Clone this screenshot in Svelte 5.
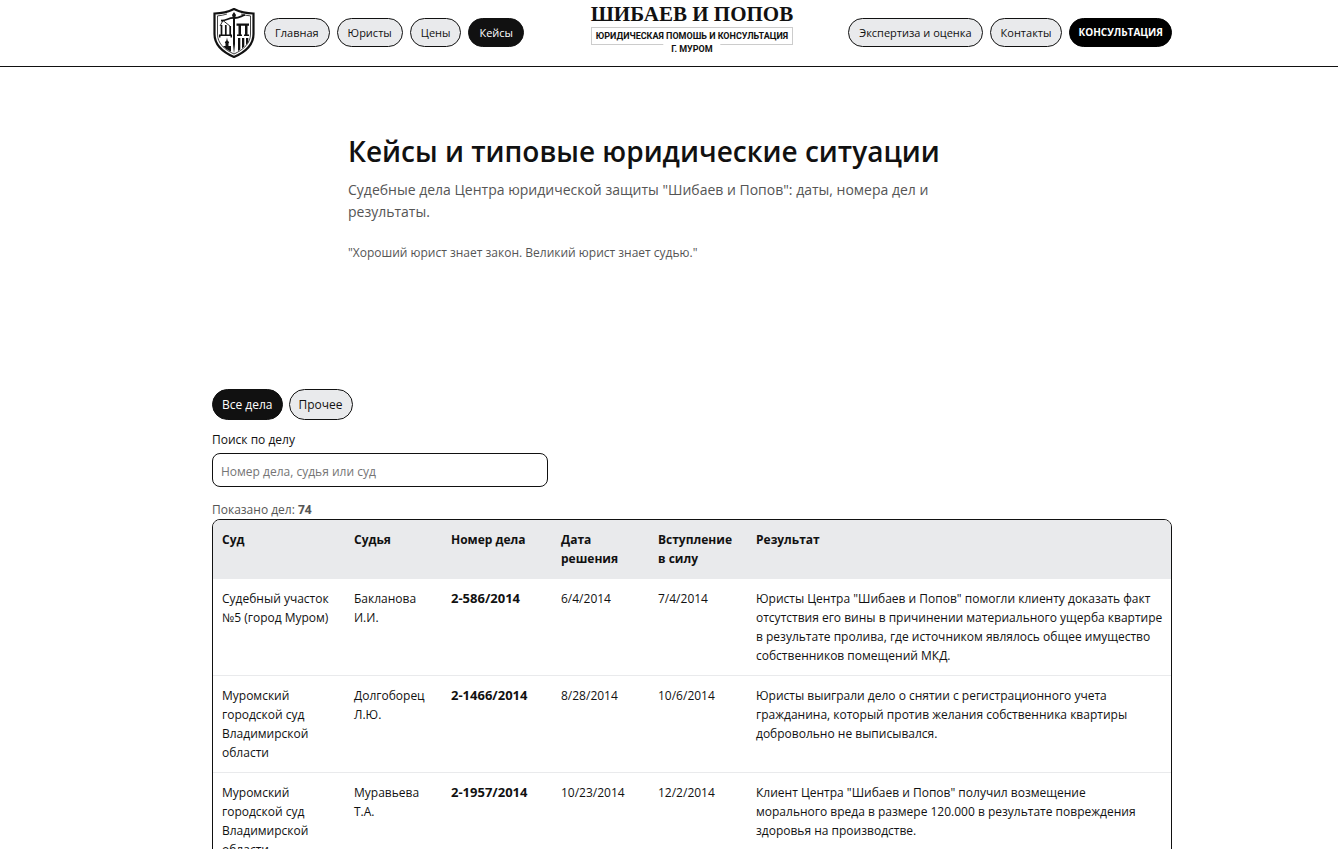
<script>
  const leftLinks = [
    { label: 'Главная', href: '#home' },
    { label: 'Юристы', href: '#lawyers' },
    { label: 'Цены', href: '#prices' },
    { label: 'Кейсы', href: '#cases', active: true },
  ];

  const rightLinks = [
    { label: 'Экспертиза и оценка', href: '#expertise' },
    { label: 'Контакты', href: '#contacts' },
  ];

  const filters = ['Все дела', 'Прочее'];
  const total = 74;

  const cases = [
    {
      court: 'Судебный участок №5 (город Муром)',
      judge: 'Бакланова И.И.',
      number: '2-586/2014',
      decided: '6/4/2014',
      effective: '7/4/2014',
      result:
        'Юристы Центра "Шибаев и Попов" помогли клиенту доказать факт отсутствия его вины в причинении материального ущерба квартире в результате пролива, где источником являлось общее имущество собственников помещений МКД.',
    },
    {
      court: 'Муромский городской суд Владимирской области',
      judge: 'Долгоборец Л.Ю.',
      number: '2-1466/2014',
      decided: '8/28/2014',
      effective: '10/6/2014',
      result:
        'Юристы выиграли дело о снятии с регистрационного учета гражданина, который против желания собственника квартиры добровольно не выписывался.',
    },
    {
      court: 'Муромский городской суд Владимирской области',
      judge: 'Муравьева Т.А.',
      number: '2-1957/2014',
      decided: '10/23/2014',
      effective: '12/2/2014',
      result:
        'Клиент Центра "Шибаев и Попов" получил возмещение морального\u00a0вреда в размере 120.000 в результате повреждения здоровья на производстве.',
    },
  ];

  let activeFilter = $state('Все дела');
  let query = $state('');

  let visible = $derived(
    cases.filter((c) => `${c.number} ${c.judge} ${c.court}`.toLowerCase().includes(query.trim().toLowerCase()))
  );
  let count = $derived(query.trim() ? visible.length : total);
</script>

<div class="page">
  <header class="header">
    <div class="container header-row">
      <nav class="nav">
        <a class="logo" href="#home" aria-label="Шибаев и Попов">
          <svg viewBox="0 0 42 50" width="42" height="50" aria-hidden="true">
            <!-- shield -->
            <path d="M21 1C15 4 8 5.500 1.500 5.500V26c0 11 8 18 19.500 23 11.500-5 19.500-12 19.500-23V5.500C34 5.500 27 4 21 1z" fill="#fff" stroke="#111" stroke-width="2.200" />
            <path d="M14 6C11 7 8 7.600 4.500 7.900V26c0 9 6.500 15.500 16.500 20 10-4.500 16.500-11 16.500-20V7.900C34 7.600 31 7 28 6" fill="none" stroke="#111" stroke-width="0.800" />
            <!-- sword and beam -->
            <path d="M21 4l2 3-1 3v26l-1 10-1-10V10l-1-3z" fill="#111" />
            <path d="M8 12.500c5 .5 8-3 13-2.500 5 .3 7-2 11-3" fill="none" stroke="#111" stroke-width="1.800" />
            <!-- left pan -->
            <path d="M10 12.500L7 18M10 12.500l7.500 6" stroke="#111" stroke-width="0.900" />
            <path d="M8.500 17v10M12.800 17v10M17.200 18v9" stroke="#111" stroke-width="1.700" />
            <path d="M6 26.500h13v3h-1.500V28h-10v1.500H6z" fill="#111" />
            <!-- portico -->
            <path d="M23.500 15.500H36v2.300H23.500zM25.500 17.800h2.500V27h-2.500zM32 17.800h2.500V27H32zM24 26.500h5V28h-5zM31 26.500h5V28h-5z" fill="#111" />
            <path d="M25 30h2.300v11.500L25 43zM29 30h2.300v8.500L29 40.500zM33 30h2.300v4L33 37z" fill="#111" />
            <!-- church -->
            <path d="M14 29.500l.6 3 1.600 1.700-.7 1.300V38h2.500v5.800c-4-2-6-3.500-8-5.800h2.500v-2.500l-.7-1.300 1.600-1.700z" fill="#111" />
          </svg>
        </a>
        {#each leftLinks as link}
          <a class="pill" class:active={link.active} href={link.href}>{link.label}</a>
        {/each}
      </nav>

      <a class="brand" href="#home">
        <span class="brand-name">ШИБАЕВ И ПОПОВ</span>
        <span class="brand-box">
          ЮРИДИЧЕСКАЯ ПОМОШЬ И КОНСУЛЬТАЦИЯ
          <span class="brand-city">Г. МУРОМ</span>
        </span>
      </a>

      <nav class="nav nav-right">
        {#each rightLinks as link}
          <a class="pill" href={link.href}>{link.label}</a>
        {/each}
        <a class="pill cta" href="#consultation">КОНСУЛЬТАЦИЯ</a>
      </nav>
    </div>
  </header>

  <main>
    <section class="hero">
      <h1>Кейсы и типовые юридические ситуации</h1>
      <p class="lead">Судебные дела Центра юридической защиты "Шибаев и Попов": даты, номера дел и результаты.</p>
      <p class="quote">"Хороший юрист знает закон. Великий юрист знает судью."</p>
    </section>

    <section class="container">
      <div class="filters">
        {#each filters as name}
          <button class="chip" class:active={activeFilter === name} onclick={() => (activeFilter = name)}>{name}</button>
        {/each}
      </div>

      <div class="search">
        <label for="case-search">Поиск по делу</label>
        <input id="case-search" type="text" placeholder="Номер дела, судья или суд" bind:value={query} />
      </div>

      <p class="count">Показано дел: <strong>{count}</strong></p>

      <div class="table-wrap">
        <table>
          <colgroup>
            <col class="col-court" />
            <col class="col-judge" />
            <col class="col-number" />
            <col class="col-judge" />
            <col class="col-effective" />
            <col />
          </colgroup>
          <thead>
            <tr>
              <th>Суд</th>
              <th>Судья</th>
              <th>Номер дела</th>
              <th>Дата решения</th>
              <th>Вступление в силу</th>
              <th>Результат</th>
            </tr>
          </thead>
          <tbody>
            {#each visible as item}
              <tr>
                <td>{item.court}</td>
                <td>{item.judge}</td>
                <td class="number"><strong>{item.number}</strong></td>
                <td>{item.decided}</td>
                <td>{item.effective}</td>
                <td class="result">{item.result}</td>
              </tr>
            {/each}
          </tbody>
        </table>
      </div>
    </section>
  </main>
</div>

<style>
  :global(body) {
    margin: 0;
    background: #fff;
  }

  .page {
    font-family: 'Open Sans', 'Noto Sans', sans-serif;
    font-size: 12px;
    line-height: 19px;
    color: #111;
  }

  .header,
  main {
    padding-left: 46px;
  }

  .header {
    background: #fff;
    border-bottom: 1px solid #111;
  }

  .container {
    max-width: 960px;
    margin: 0 auto;
  }

  .header-row {
    display: grid;
    grid-template-columns: 1fr auto 1fr;
    align-items: center;
    padding-bottom: 1px;
    height: 65px;
  }

  .nav {
    display: flex;
    align-items: center;
    gap: 7px;
  }

  .nav-right {
    justify-content: flex-end;
  }

  .logo {
    display: flex;
    padding: 0 2px 0 1px;
  }

  .pill {
    padding: 5px 10px;
    border: 1px solid #111;
    border-radius: 16px;
    background: #e9eaec;
    color: #111;
    font-size: 11px;
    line-height: 17px;
    text-decoration: none;
    white-space: nowrap;
  }

  .pill.active {
    background: #111;
    color: #fff;
  }

  .pill.cta {
    padding: 5px 8px;
    background: #000;
    border-color: #000;
    color: #fff;
    font-size: 10px;
    font-weight: 700;
  }

  .brand {
    display: flex;
    flex-direction: column;
    align-self: start;
    padding-top: 2px;
    color: #111;
    text-align: center;
    text-decoration: none;
    white-space: nowrap;
  }

  .brand-name {
    font-family: 'Liberation Serif', serif;
    font-size: 21px;
    font-weight: 700;
    line-height: 25px;
  }

  .brand-box {
    position: relative;
    border: 1px solid #ccc;
    font-family: Roboto, sans-serif;
    font-size: 9px;
    font-weight: 700;
    line-height: 16px;
  }

  .brand-city {
    position: absolute;
    top: 15px;
    left: 50%;
    transform: translateX(-50%);
    padding: 0 8px;
    background: #fff;
    line-height: 13px;
  }

  .hero {
    max-width: 688px;
    margin: 0 auto;
    padding: 64px 0 127px;
  }

  h1 {
    margin: 0 0 8px;
    font-size: 28px;
    font-weight: 600;
    line-height: 40px;
  }

  .lead {
    max-width: 620px;
    margin: 0 0 20px;
    color: #555;
    font-size: 14px;
    line-height: 22px;
  }

  .quote {
    margin: 0;
    color: #555;
  }

  .filters {
    display: flex;
    gap: 6px;
    margin-bottom: 10px;
  }

  .chip {
    padding: 5px 9px;
    border: 1px solid #111;
    border-radius: 16px;
    background: #e9eaec;
    color: #111;
    font: inherit;
    cursor: pointer;
  }

  .chip.active {
    background: #111;
    color: #fff;
  }

  .search {
    display: flex;
    flex-direction: column;
    gap: 4px;
    max-width: 336px;
    margin-bottom: 14px;
  }

  .search input {
    height: 34px;
    box-sizing: border-box;
    padding: 2px 8px 0;
    border: 1px solid #111;
    border-radius: 8px;
    background: #fff;
    color: #111;
    font: inherit;
  }

  .search input::placeholder {
    color: #757575;
  }

  .count {
    margin: 0;
    color: #555;
    line-height: 18px;
  }

  .table-wrap {
    overflow: hidden;
    border: 1px solid #111;
    border-radius: 8px;
    background: #fff;
  }

  table {
    width: 100%;
    table-layout: fixed;
    border-collapse: collapse;
  }

  .col-court {
    width: 132px;
  }

  .col-judge {
    width: 97px;
  }

  .col-number {
    width: 110px;
  }

  .col-effective {
    width: 98px;
  }

  th,
  td {
    padding: 10px 9px;
    border-bottom: 1px solid #e9eaec;
    text-align: left;
    vertical-align: top;
  }

  th {
    background: #e9eaec;
    font-weight: 700;
  }

  .number {
    font-size: 13px;
  }

  .result {
    padding-right: 4px;
  }
</style>
